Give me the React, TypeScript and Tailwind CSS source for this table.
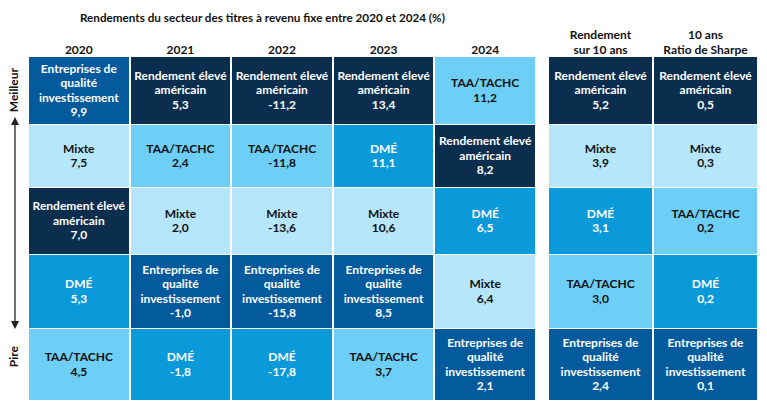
import React from "react";

type Tone = "navy" | "medium" | "bright" | "light" | "pale";

type Cell = {
  label: string[];
  value: string;
  tone: Tone;
};

const toneClass: Record<Tone, string> = {
  navy: "bg-[#0b2e4f] text-white",
  medium: "bg-[#035b9d] text-white",
  bright: "bg-[#0a9ad9] text-white",
  light: "bg-[#6dcff6] text-[#111]",
  pale: "bg-[#b5e6fb] text-[#111]",
};

const HY = ["Rendement élevé", "américain"];
const IG = ["Entreprises de", "qualité", "investissement"];
const MIX = ["Mixte"];
const EMD = ["DMÉ"];
const TAA = ["TAA/TACHC"];

const c = (label: string[], value: string, tone: Tone): Cell => ({
  label,
  value,
  tone,
});

// rows, best to worst
const yearRows: Cell[][] = [
  [
    c(IG, "9,9", "medium"),
    c(HY, "5,3", "navy"),
    c(HY, "-11,2", "navy"),
    c(HY, "13,4", "navy"),
    c(TAA, "11,2", "light"),
  ],
  [
    c(MIX, "7,5", "pale"),
    c(TAA, "2,4", "light"),
    c(TAA, "-11,8", "light"),
    c(EMD, "11,1", "bright"),
    c(HY, "8,2", "navy"),
  ],
  [
    c(HY, "7,0", "navy"),
    c(MIX, "2,0", "pale"),
    c(MIX, "-13,6", "pale"),
    c(MIX, "10,6", "pale"),
    c(EMD, "6,5", "bright"),
  ],
  [
    c(EMD, "5,3", "bright"),
    c(IG, "-1,0", "medium"),
    c(IG, "-15,8", "medium"),
    c(IG, "8,5", "medium"),
    c(MIX, "6,4", "pale"),
  ],
  [
    c(TAA, "4,5", "light"),
    c(EMD, "-1,8", "bright"),
    c(EMD, "-17,8", "bright"),
    c(TAA, "3,7", "light"),
    c(IG, "2,1", "medium"),
  ],
];

const tenYearRows: Cell[][] = [
  [c(HY, "5,2", "navy"), c(HY, "0,5", "navy")],
  [c(MIX, "3,9", "pale"), c(MIX, "0,3", "pale")],
  [c(EMD, "3,1", "bright"), c(TAA, "0,2", "light")],
  [c(TAA, "3,0", "light"), c(EMD, "0,2", "bright")],
  [c(IG, "2,4", "medium"), c(IG, "0,1", "medium")],
];

function RankCell({ cell }: { cell: Cell }) {
  return (
    <div
      className={`flex flex-col items-center justify-center text-center ${toneClass[cell.tone]}`}
    >
      {cell.label.map((line) => (
        <span key={line} className="whitespace-nowrap">
          {line}
        </span>
      ))}
      <span>{cell.value}</span>
    </div>
  );
}

const gridRows = "grid-rows-[67px_62px_66px_73px_71px]";

export default function App() {
  return (
    <div
      className="h-[410px] w-[767px] overflow-hidden bg-white text-[12px] font-bold leading-[14.5px] text-[#111]"
      style={{ fontFamily: "Lato, 'Liberation Sans', sans-serif" }}
    >
      <div className="pl-[80px] pt-[9px] text-[11.7px] leading-[16px]">
        Rendements du secteur des titres à revenu fixe entre 2020 et 2024 (%)
      </div>

      <div className="mt-[1px] flex">
        {/* best / worst axis */}
        <div className="flex w-[29px] flex-col items-center pt-[42px]">
          <span className="rotate-180 text-[12px] [writing-mode:vertical-rl]">
            Meilleur
          </span>
          <svg width="10" height="214" viewBox="0 0 10 214" className="mt-[4px]">
            <line x1="5" y1="4" x2="5" y2="210" stroke="#333" strokeWidth="1.4" />
            <path d="M1 9 L5 1 L9 9 Z" fill="#222" />
            <path d="M1 205 L5 213 L9 205 Z" fill="#222" />
          </svg>
          <span className="mt-[16px] rotate-180 text-[12px] [writing-mode:vertical-rl]">
            Pire
          </span>
        </div>

        {/* calendar years */}
        <div className="w-[506px]">
          <div className="grid h-[31px] grid-cols-5 items-end gap-x-[2px] text-center leading-[15px]">
            {["2020", "2021", "2022", "2023", "2024"].map((y) => (
              <div key={y}>{y}</div>
            ))}
          </div>
          <div className={`grid grid-cols-5 gap-x-[2px] gap-y-[1px] ${gridRows}`}>
            {yearRows.flat().map((cell, i) => (
              <RankCell key={i} cell={cell} />
            ))}
          </div>
        </div>

        {/* 10 year */}
        <div className="ml-[14px] w-[208px]">
          <div className="grid h-[31px] grid-cols-2 items-end gap-x-[2px] text-center leading-[15px]">
            <div>
              Rendement
              <br />
              sur 10 ans
            </div>
            <div>
              10 ans
              <br />
              Ratio de Sharpe
            </div>
          </div>
          <div className={`grid grid-cols-2 gap-x-[2px] gap-y-[1px] ${gridRows}`}>
            {tenYearRows.flat().map((cell, i) => (
              <RankCell key={i} cell={cell} />
            ))}
          </div>
        </div>
      </div>
    </div>
  );
}
